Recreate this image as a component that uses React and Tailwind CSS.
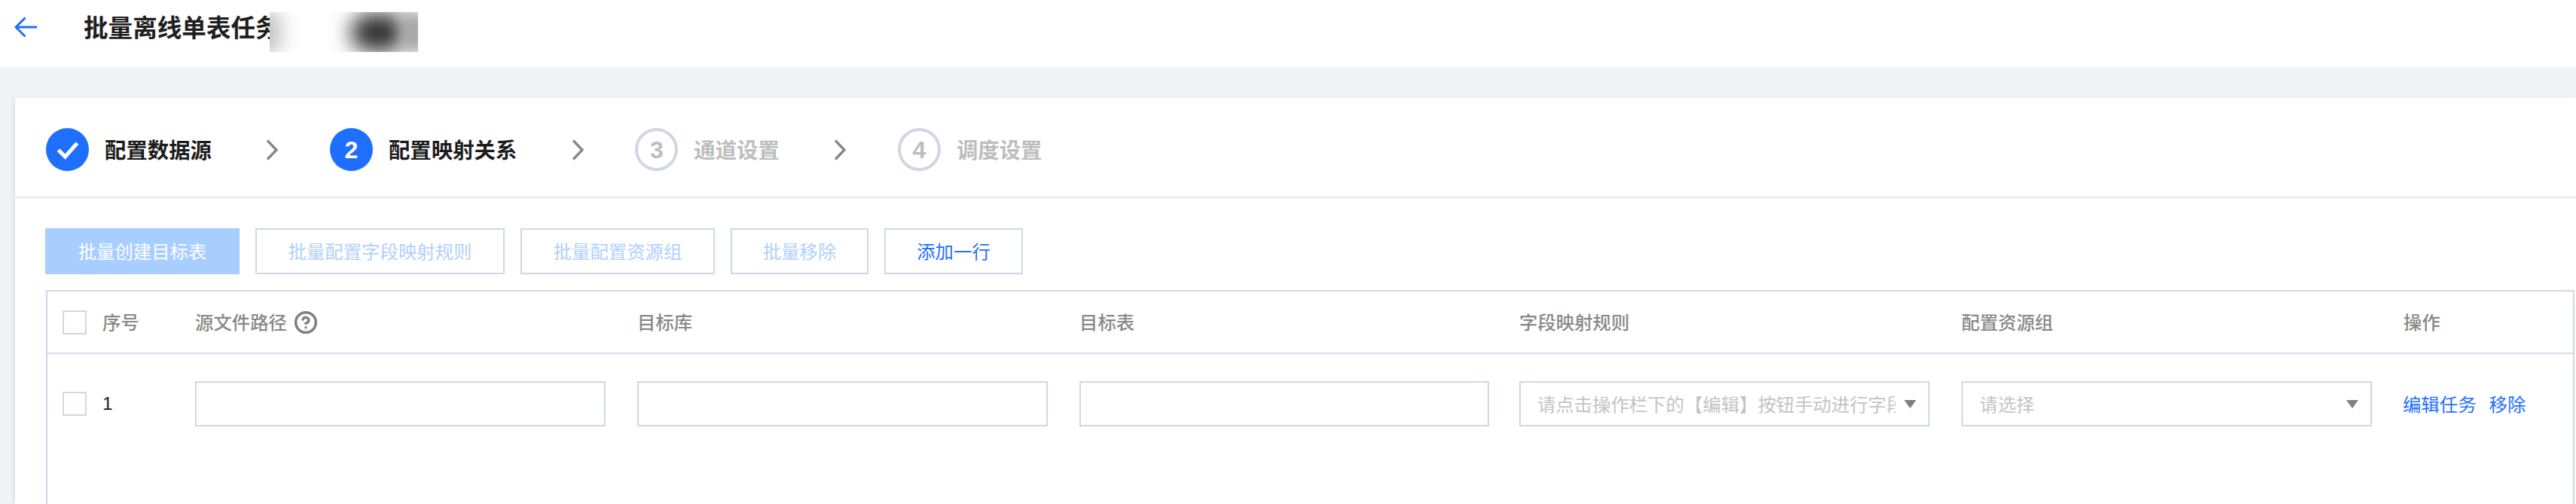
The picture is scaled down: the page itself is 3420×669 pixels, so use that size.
import React from "react";
import { CircleHelp } from "lucide-react";

const FONT = "font-['Noto_Sans_CJK_SC',sans-serif]";

function Chevron() {
  return (
    <svg width="17" height="28" viewBox="0 0 17 28" fill="none" className="shrink-0">
      <polyline points="2,1.5 14,14 2,26.5" stroke="#888888" strokeWidth="3.4" />
    </svg>
  );
}

function Step({ state, num, label, labelClass }) {
  return (
    <div className="flex items-center">
      {state === "done" && (
        <div className="w-[57px] h-[57px] rounded-full bg-[#1f6fff] flex items-center justify-center">
          <svg width="30" height="26" viewBox="0 0 30 26" fill="none">
            <polyline points="2.5,13 11.5,22 27.5,4" stroke="#ffffff" strokeWidth="5" />
          </svg>
        </div>
      )}
      {state === "active" && (
        <div className="w-[57px] h-[57px] rounded-full bg-[#1f6fff] flex items-center justify-center text-white text-[32px] font-bold font-['Liberation_Sans',sans-serif] leading-none">
          {num}
        </div>
      )}
      {state === "todo" && (
        <div className="w-[57px] h-[57px] rounded-full border-4 border-[#d0d7e3] flex items-center justify-center text-[#bdbdbd] text-[32px] font-bold font-['Liberation_Sans',sans-serif] leading-none">
          {num}
        </div>
      )}
      <span className={`ml-[21px] text-[28.4px] leading-none font-semibold ${labelClass}`}>{label}</span>
    </div>
  );
}

function Button({ width, children, kind }) {
  const cls =
    kind === "primary"
      ? "bg-[#a8cdff] border-[#a8cdff] text-white"
      : kind === "active"
      ? "bg-white border-[#d0d7e3] text-[#1f6fff]"
      : "bg-white border-[#d0d7e3] text-[#b0d0ff]";
  return (
    <div className={`h-[61px] border-2 flex items-center justify-center text-[24.4px] leading-none ${cls} ${width}`}>
      {children}
    </div>
  );
}

function Checkbox() {
  return <div className="w-[32px] h-[32px] border-2 border-[#d0d7e3] bg-white shrink-0" />;
}

function Select({ placeholder }) {
  return (
    <div className="h-[60px] border-2 border-[#d0d7e3] flex items-center pl-[22px] pr-[16px] bg-white">
      <span className="flex-1 min-w-0 overflow-hidden whitespace-nowrap text-[24.4px] leading-[36px] text-[#c4c4c4]">
        {placeholder}
      </span>
      <svg width="16" height="11" viewBox="0 0 16 11" className="ml-[11px] shrink-0">
        <polygon points="0,0 16,0 8,11" fill="#808080" />
      </svg>
    </div>
  );
}

function Input() {
  return <div className="h-[60px] border-2 border-[#d0d7e3] bg-white" />;
}

const GRID = "grid grid-cols-[176px_587px_587px_584px_587px_586px_1fr]";

export default function App() {
  return (
    <div className={`h-[669px] w-[3420px] overflow-hidden bg-[#f2f3f7] flex flex-col ${FONT}`}>
      <header className="h-[89px] shrink-0 bg-white flex items-center pb-[17px] pl-[19px]">
        <svg width="30" height="28" viewBox="0 0 30 28" fill="none" className="shrink-0">
          <path d="M14.5 1.5 L2 14 L14.5 26.5 M2 14 H30" stroke="#1f6fff" strokeWidth="3" />
        </svg>
        <div className="relative ml-[62px]">
          <span className="text-[32.6px] leading-none font-bold text-[#1f1f1f] whitespace-nowrap">批量离线单表任务</span>
          <div className="absolute left-[247px] top-[-3px] w-[197px] h-[53px] overflow-hidden bg-white">
            <div className="absolute left-[108px] top-[2px] w-[72px] h-[50px] rounded-full bg-[#2e2e2e] blur-[14px]" />
            <div className="absolute left-[-30px] top-[0px] w-[42px] h-[53px] bg-[#b5b5b5] blur-[14px]" />
            <div className="absolute right-[-10px] top-[0px] w-[30px] h-[53px] bg-[#a0a0a0] blur-[10px]" />
          </div>
        </div>
      </header>

      <main className="mt-[41px] ml-[20px] flex-1 bg-white shadow-[-3px_0_5px_rgba(0,0,0,0.07)] flex flex-col">
        <div className="h-[133px] shrink-0 border-b-2 border-[#e8ecf2] flex items-center pt-[6px] pl-[41px]">
          <Step state="done" label="配置数据源" labelClass="text-[#1c1c1c]" />
          <div className="ml-[72px] mr-[68px] flex items-center"><Chevron /></div>
          <Step state="active" num="2" label="配置映射关系" labelClass="text-[#1c1c1c]" />
          <div className="ml-[73px] mr-[67px] flex items-center"><Chevron /></div>
          <Step state="todo" num="3" label="通道设置" labelClass="text-[#bdbdbd]" />
          <div className="ml-[72px] mr-[68px] flex items-center"><Chevron /></div>
          <Step state="todo" num="4" label="调度设置" labelClass="text-[#bdbdbd]" />
        </div>

        <div className="mt-[40px] pl-[40px] flex gap-[21px]">
          <Button kind="primary" width="w-[258px]">批量创建目标表</Button>
          <Button width="w-[331px]">批量配置字段映射规则</Button>
          <Button width="w-[258px]">批量配置资源组</Button>
          <Button width="w-[183px]">批量移除</Button>
          <Button kind="active" width="w-[184px]">添加一行</Button>
        </div>

        <div className="mt-[21px] ml-[41px] mr-[2px] flex-1 border-x-2 border-t-2 border-[#d0d7e3] flex flex-col">
          <div className={`${GRID} h-[81px] shrink-0 items-center text-[24.4px] leading-none text-[#888888] font-medium`}>
            <div className="flex items-center pl-[20px]">
              <Checkbox />
              <span className="ml-[21px]">序号</span>
            </div>
            <div className="flex items-center pl-[20px]">
              <span>源文件路径</span>
              <CircleHelp size={32} strokeWidth={2.6} className="ml-[9px] text-[#808080]" />
            </div>
            <div className="pl-[20px]">目标库</div>
            <div className="pl-[20px]">目标表</div>
            <div className="pl-[20px]">字段映射规则</div>
            <div className="pl-[20px]">配置资源组</div>
            <div className="pl-[21px]">操作</div>
          </div>
          <div className={`${GRID} border-t-2 border-[#d8dde7] pt-[36px] items-center text-[24.4px] leading-none`}>
            <div className="flex items-center pl-[20px]">
              <Checkbox />
              <span className="ml-[21px] text-[#1c1c1c] font-['Liberation_Sans',sans-serif]">1</span>
            </div>
            <div className="pl-[20px] pr-[22px]"><Input /></div>
            <div className="pl-[20px] pr-[22px]"><Input /></div>
            <div className="pl-[20px] pr-[20px]"><Input /></div>
            <div className="pl-[20px] pr-[22px]">
              <Select placeholder="请点击操作栏下的【编辑】按钮手动进行字段映射" />
            </div>
            <div className="pl-[20px] pr-[21px]"><Select placeholder="请选择" /></div>
            <div className="pl-[20px] flex items-center gap-[17px] text-[#1f6fff] whitespace-nowrap">
              <span>编辑任务</span>
              <span>移除</span>
            </div>
          </div>
        </div>
      </main>
    </div>
  );
}
